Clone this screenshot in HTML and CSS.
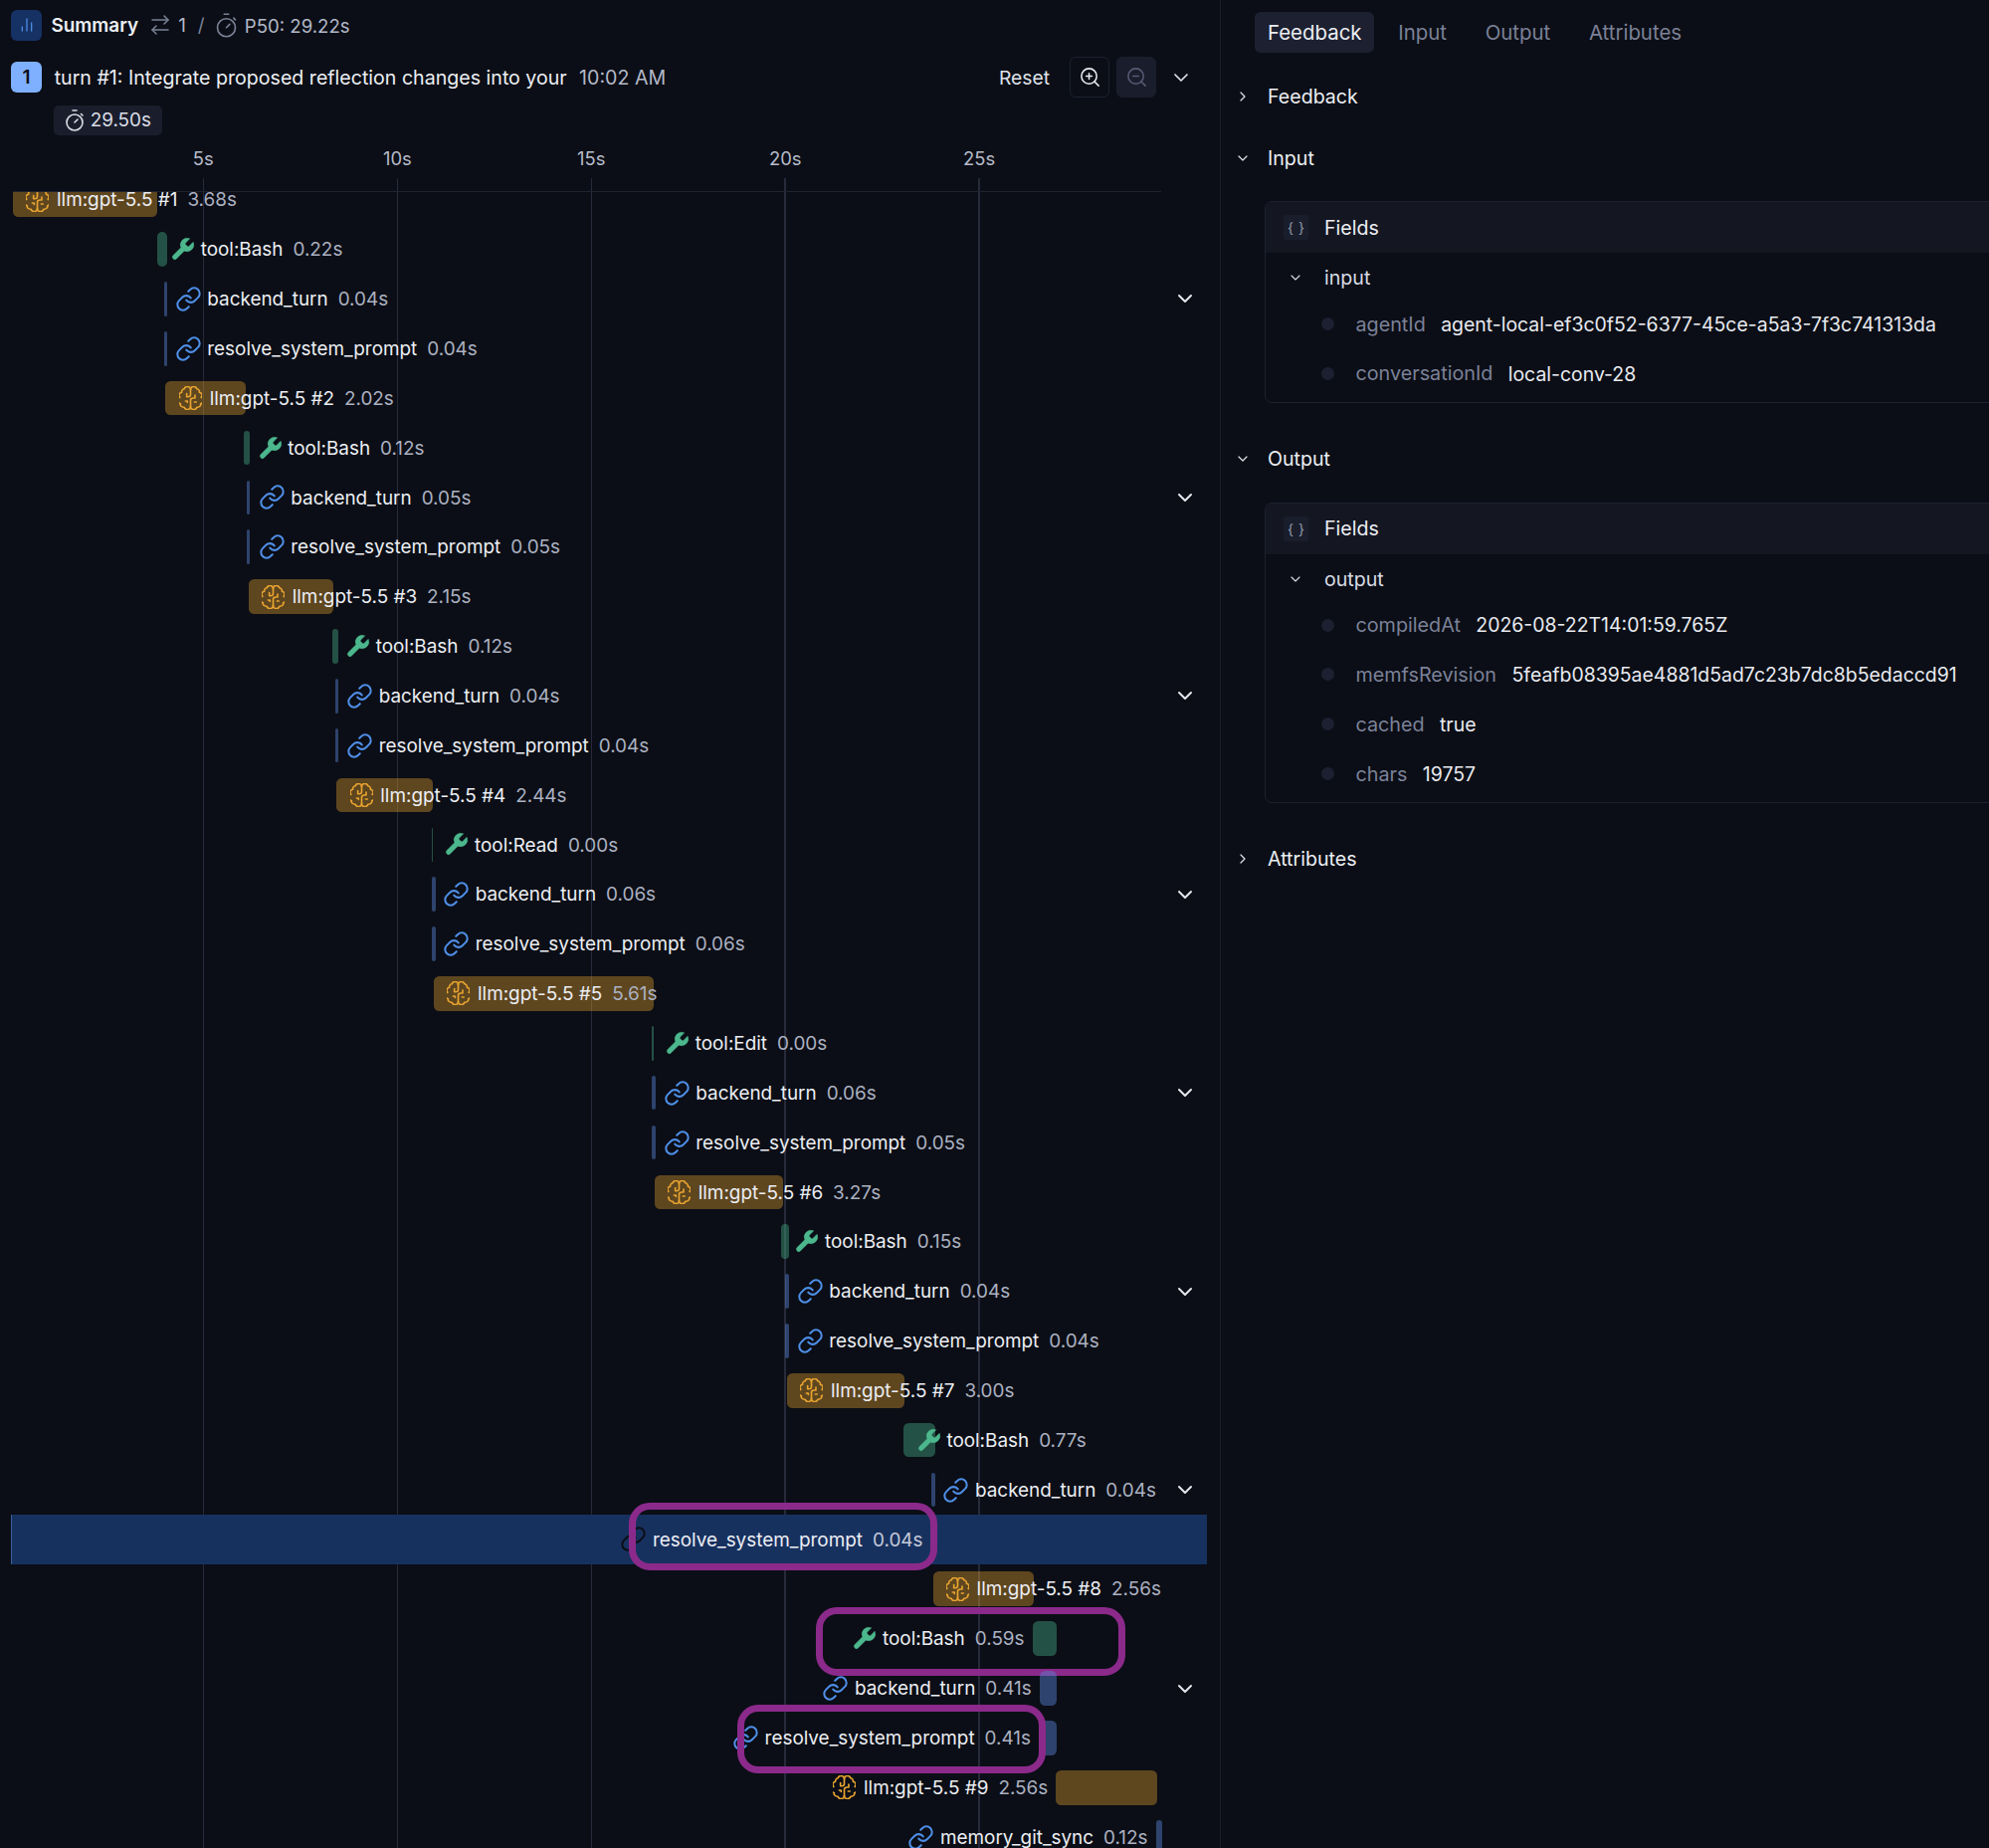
FILE: index.html
```html
<!DOCTYPE html>
<html lang="en">
<head>
<meta charset="utf-8">
<title>Trace</title>
<link rel="stylesheet" href="styles.css">
</head>
<body>
<svg class="defs" width="0" height="0" aria-hidden="true">
  <symbol id="i-link" viewBox="0 0 24 24"><path d="M10 13a5 5 0 0 0 7.54.54l3-3a5 5 0 0 0-7.07-7.07l-1.72 1.71"/><path d="M14 11a5 5 0 0 0-7.54-.54l-3 3a5 5 0 0 0 7.07 7.07l1.71-1.71"/></symbol>
  <symbol id="i-wrench" viewBox="0 0 24 24"><path d="M14.7 6.3a1 1 0 0 0 0 1.4l1.6 1.6a1 1 0 0 0 1.4 0l3.77-3.77a6 6 0 0 1-7.94 7.94l-6.91 6.91a2.12 2.12 0 0 1-3-3l6.91-6.91a6 6 0 0 1 7.94-7.94l-3.76 3.76z"/></symbol>
  <symbol id="i-brain" viewBox="3 1.6 18 20.8" preserveAspectRatio="none"><path d="M12 19.5a2.5 2.5 0 0 1-4.96.44 2.5 2.5 0 0 1-2.96-3.08 3 3 0 0 1-.34-5.58 2.5 2.5 0 0 1 1.32-4.24 2.5 2.5 0 0 1 1.98-3A2.5 2.5 0 0 1 9.5 2 2.5 2.5 0 0 1 12 4.5"/><path d="M12 4.5A2.5 2.5 0 0 1 14.5 2a2.5 2.5 0 0 1 2.46 2.04 2.5 2.5 0 0 1 1.98 3 2.5 2.5 0 0 1 1.32 4.24 3 3 0 0 1-.34 5.58 2.5 2.5 0 0 1-2.96 3.08A2.5 2.5 0 0 1 12 19.5"/><path d="M12 4.5V9a2 2 0 0 1-2 2H9V8"/><path d="M12 19.5V14a2 2 0 0 1 2-2h1.5V9.5"/><path d="M8 14.5h1.5V16"/><path d="M15 15.5h1.5"/></symbol>
  <symbol id="i-down" viewBox="0 0 24 24"><path d="m6 9 6 6 6-6"/></symbol>
  <symbol id="i-right" viewBox="0 0 24 24"><path d="m9 18 6-6-6-6"/></symbol>
  <symbol id="i-timer" viewBox="0 0 24 24"><path d="M10 2h4"/><path d="m12 14 3-3"/><circle cx="12" cy="14" r="8"/><path d="m18.5 5.5 1.5 1.5"/></symbol>
</svg>
<div class="app">
  <main class="trace">
    <div class="summary">
      <span class="sq sq-summary"><svg class="sq-bars" viewBox="0 0 24 24"><path d="M5 21v-6"/><path d="M12 21V3"/><path d="M19 21V9"/></svg></span>
      <strong class="t summary-title">Summary</strong>
      <svg class="ico-swap" viewBox="0 0 24 24"><path d="m16 3 4 4-4 4"/><path d="M20 7H4"/><path d="m8 21-4-4 4-4"/><path d="M4 17h16"/></svg>
      <span class="t muted count">1</span>
      <span class="t muted slash">/</span>
      <svg class="ico-timer"><use href="#i-timer"/></svg>
      <span class="t muted p50">P50: 29.22s</span>
    </div>
    <div class="turn">
      <span class="sq sq-num">1</span>
      <span class="t turn-title">turn #1: Integrate proposed reflection changes into your</span>
      <span class="t muted turn-time">10:02 AM</span>
      <span class="t reset">Reset</span>
      <button class="zoom-btn zoom-in"><svg viewBox="0 0 24 24"><circle cx="11" cy="11" r="8"/><path d="m21 21-4.35-4.35"/><path d="M11 8v6"/><path d="M8 11h6"/></svg></button>
      <button class="zoom-btn zoom-out"><svg viewBox="0 0 24 24"><circle cx="11" cy="11" r="8"/><path d="m21 21-4.35-4.35"/><path d="M8 11h6"/></svg></button>
      <svg class="turn-chev"><use href="#i-down"/></svg>
    </div>
    <div class="pill-row"><span class="pill"><svg class="ico-pill"><use href="#i-timer"/></svg><span class="t">29.50s</span></span></div>

    <section class="timeline">
      <div class="grid">
        <i class="gl" style="left:204.3px"></i><i class="gl" style="left:399.3px"></i><i class="gl" style="left:594.3px"></i><i class="gl" style="left:789.2px"></i><i class="gl" style="left:984.1px"></i>
      </div>
      <div class="ticks">
        <span class="tick" style="left:204.3px">5s</span><span class="tick" style="left:399.3px">10s</span><span class="tick" style="left:594.3px">15s</span><span class="tick" style="left:789.2px">20s</span><span class="tick" style="left:984.1px">25s</span>
      </div>
      <div class="rule"></div>
      <div class="rows">
        <div class="row first"><span class="bar llm" style="left:13.4px;width:145.1px"></span><span class="lbl" style="margin-left:26.4px"><svg class="ic brain"><use href="#i-brain"/></svg><span class="nm">llm:gpt-5.5 #1</span><span class="du">3.68s</span></span></div>
        <div class="row"><span class="bar tool" style="left:157.7px;width:10px"></span><span class="lbl" style="margin-left:171.1px"><svg class="ic wrench"><use href="#i-wrench"/></svg><span class="nm">tool:Bash</span><span class="du">0.22s</span></span></div>
        <div class="row"><span class="bar net" style="left:165px;width:2.7px"></span><span class="lbl" style="margin-left:177.7px"><svg class="ic link"><use href="#i-link"/></svg><span class="nm">backend_turn</span><span class="du">0.04s</span></span><svg class="chev"><use href="#i-down"/></svg></div>
        <div class="row"><span class="bar net" style="left:165px;width:2.7px"></span><span class="lbl" style="margin-left:177.7px"><svg class="ic link"><use href="#i-link"/></svg><span class="nm">resolve_system_prompt</span><span class="du">0.04s</span></span></div>

        <div class="row"><span class="bar llm" style="left:166.3px;width:80.4px"></span><span class="lbl" style="margin-left:180.1px"><svg class="ic brain"><use href="#i-brain"/></svg><span class="nm">llm:gpt-5.5 #2</span><span class="du">2.02s</span></span></div>
        <div class="row"><span class="bar tool" style="left:245.3px;width:6px"></span><span class="lbl" style="margin-left:258.7px"><svg class="ic wrench"><use href="#i-wrench"/></svg><span class="nm">tool:Bash</span><span class="du">0.12s</span></span></div>
        <div class="row"><span class="bar net" style="left:248px;width:3.3px"></span><span class="lbl" style="margin-left:261.7px"><svg class="ic link"><use href="#i-link"/></svg><span class="nm">backend_turn</span><span class="du">0.05s</span></span><svg class="chev"><use href="#i-down"/></svg></div>
        <div class="row"><span class="bar net" style="left:248px;width:3.3px"></span><span class="lbl" style="margin-left:261.7px"><svg class="ic link"><use href="#i-link"/></svg><span class="nm">resolve_system_prompt</span><span class="du">0.05s</span></span></div>

        <div class="row"><span class="bar llm" style="left:250px;width:85.3px"></span><span class="lbl" style="margin-left:263.1px"><svg class="ic brain"><use href="#i-brain"/></svg><span class="nm">llm:gpt-5.5 #3</span><span class="du">2.15s</span></span></div>
        <div class="row"><span class="bar tool" style="left:333.7px;width:6px"></span><span class="lbl" style="margin-left:347.1px"><svg class="ic wrench"><use href="#i-wrench"/></svg><span class="nm">tool:Bash</span><span class="du">0.12s</span></span></div>
        <div class="row"><span class="bar net" style="left:336.7px;width:3px"></span><span class="lbl" style="margin-left:350.1px"><svg class="ic link"><use href="#i-link"/></svg><span class="nm">backend_turn</span><span class="du">0.04s</span></span><svg class="chev"><use href="#i-down"/></svg></div>
        <div class="row"><span class="bar net" style="left:336.7px;width:3px"></span><span class="lbl" style="margin-left:350.1px"><svg class="ic link"><use href="#i-link"/></svg><span class="nm">resolve_system_prompt</span><span class="du">0.04s</span></span></div>

        <div class="row"><span class="bar llm" style="left:338.3px;width:96.4px"></span><span class="lbl" style="margin-left:351.7px"><svg class="ic brain"><use href="#i-brain"/></svg><span class="nm">llm:gpt-5.5 #4</span><span class="du">2.44s</span></span></div>
        <div class="row"><span class="bar tool" style="left:433.7px;width:1.5px"></span><span class="lbl" style="margin-left:446.4px"><svg class="ic wrench"><use href="#i-wrench"/></svg><span class="nm">tool:Read</span><span class="du">0.00s</span></span></div>
        <div class="row"><span class="bar net" style="left:433.7px;width:4px"></span><span class="lbl" style="margin-left:447.1px"><svg class="ic link"><use href="#i-link"/></svg><span class="nm">backend_turn</span><span class="du">0.06s</span></span><svg class="chev"><use href="#i-down"/></svg></div>
        <div class="row"><span class="bar net" style="left:433.7px;width:4px"></span><span class="lbl" style="margin-left:447.1px"><svg class="ic link"><use href="#i-link"/></svg><span class="nm">resolve_system_prompt</span><span class="du">0.06s</span></span></div>

        <div class="row"><span class="bar llm" style="left:436.3px;width:220.4px"></span><span class="lbl" style="margin-left:449.4px"><svg class="ic brain"><use href="#i-brain"/></svg><span class="nm">llm:gpt-5.5 #5</span><span class="du">5.61s</span></span></div>
        <div class="row"><span class="bar tool" style="left:655px;width:2px"></span><span class="lbl" style="margin-left:668.1px"><svg class="ic wrench"><use href="#i-wrench"/></svg><span class="nm">tool:Edit</span><span class="du">0.00s</span></span></div>
        <div class="row"><span class="bar net" style="left:655.3px;width:3.7px"></span><span class="lbl" style="margin-left:668.7px"><svg class="ic link"><use href="#i-link"/></svg><span class="nm">backend_turn</span><span class="du">0.06s</span></span><svg class="chev"><use href="#i-down"/></svg></div>
        <div class="row"><span class="bar net" style="left:655.3px;width:3.7px"></span><span class="lbl" style="margin-left:668.7px"><svg class="ic link"><use href="#i-link"/></svg><span class="nm">resolve_system_prompt</span><span class="du">0.05s</span></span></div>

        <div class="row"><span class="bar llm" style="left:657.7px;width:129px"></span><span class="lbl" style="margin-left:671.1px"><svg class="ic brain"><use href="#i-brain"/></svg><span class="nm">llm:gpt-5.5 #6</span><span class="du">3.27s</span></span></div>
        <div class="row"><span class="bar tool" style="left:785px;width:7.7px"></span><span class="lbl" style="margin-left:798.4px"><svg class="ic wrench"><use href="#i-wrench"/></svg><span class="nm">tool:Bash</span><span class="du">0.15s</span></span></div>
        <div class="row"><span class="bar net" style="left:789px;width:3.7px"></span><span class="lbl" style="margin-left:802.7px"><svg class="ic link"><use href="#i-link"/></svg><span class="nm">backend_turn</span><span class="du">0.04s</span></span><svg class="chev"><use href="#i-down"/></svg></div>
        <div class="row"><span class="bar net" style="left:789px;width:3.7px"></span><span class="lbl" style="margin-left:802.7px"><svg class="ic link"><use href="#i-link"/></svg><span class="nm">resolve_system_prompt</span><span class="du">0.04s</span></span></div>

        <div class="row"><span class="bar llm" style="left:791px;width:118px"></span><span class="lbl" style="margin-left:804.4px"><svg class="ic brain"><use href="#i-brain"/></svg><span class="nm">llm:gpt-5.5 #7</span><span class="du">3.00s</span></span></div>
        <div class="row"><span class="bar tool" style="left:908px;width:31.6px"></span><span class="lbl" style="margin-left:920.8px"><svg class="ic wrench"><use href="#i-wrench"/></svg><span class="nm">tool:Bash</span><span class="du">0.77s</span></span></div>
        <div class="row"><span class="bar net" style="left:936.3px;width:3.3px"></span><span class="lbl" style="margin-left:949.4px"><svg class="ic link"><use href="#i-link"/></svg><span class="nm">backend_turn</span><span class="du">0.04s</span></span><svg class="chev"><use href="#i-down"/></svg></div>
        <div class="row row-sel"><span class="lbl" style="margin-left:625.4px"><svg class="ic link"><use href="#i-link"/></svg><span class="nm">resolve_system_prompt</span><span class="du">0.04s</span></span><span class="mark mark-a"></span></div>

        <div class="row"><span class="bar llm" style="left:938px;width:101px"></span><span class="lbl" style="margin-left:951px"><svg class="ic brain"><use href="#i-brain"/></svg><span class="nm">llm:gpt-5.5 #8</span><span class="du">2.56s</span></span></div>
        <div class="row"><span class="bar tool" style="left:1038px;width:24.4px"></span><span class="lbl" style="margin-left:856.4px"><svg class="ic wrench"><use href="#i-wrench"/></svg><span class="nm">tool:Bash</span><span class="du">0.59s</span></span><span class="mark mark-b"></span></div>
        <div class="row"><span class="bar net" style="left:1045px;width:17.4px"></span><span class="lbl" style="margin-left:828.4px"><svg class="ic link"><use href="#i-link"/></svg><span class="nm">backend_turn</span><span class="du">0.41s</span></span><svg class="chev"><use href="#i-down"/></svg></div>
        <div class="row"><span class="bar net" style="left:1045px;width:17.4px"></span><span class="lbl" style="margin-left:738px"><svg class="ic link"><use href="#i-link"/></svg><span class="nm">resolve_system_prompt</span><span class="du">0.41s</span></span><span class="mark mark-c"></span></div>

        <div class="row"><span class="bar llm" style="left:1061px;width:101.5px"></span><span class="lbl" style="margin-left:837.4px"><svg class="ic brain"><use href="#i-brain"/></svg><span class="nm">llm:gpt-5.5 #9</span><span class="du">2.56s</span></span></div>
        <div class="row"><span class="bar net" style="left:1161.6px;width:6.2px"></span><span class="lbl" style="margin-left:914.4px"><svg class="ic link"><use href="#i-link"/></svg><span class="nm">memory_git_sync</span><span class="du">0.12s</span></span></div>
      </div>
    </section>
  </main>

  <aside class="details">
    <nav class="tabs">
      <span class="tab tab-on"><span class="t">Feedback</span></span><span class="tab"><span class="t">Input</span></span><span class="tab"><span class="t">Output</span></span><span class="tab"><span class="t">Attributes</span></span>
    </nav>
    <div class="acc"><svg class="acc-chev"><use href="#i-right"/></svg><span class="t">Feedback</span></div>
    <div class="acc"><svg class="acc-chev"><use href="#i-down"/></svg><span class="t">Input</span></div>
    <div class="card">
      <div class="card-head"><span class="braces">{ }</span><span class="t">Fields</span></div>
      <div class="kv-head"><span class="kv-chev"><svg><use href="#i-down"/></svg></span><span class="t">input</span></div>
      <div class="kv"><i class="dot"></i><span class="t k">agentId</span><span class="t v">agent-local-ef3c0f52-6377-45ce-a5a3-7f3c741313da</span></div>
      <div class="kv"><i class="dot"></i><span class="t k">conversationId</span><span class="t v">local-conv-28</span></div>
    </div>
    <div class="acc acc-next"><svg class="acc-chev"><use href="#i-down"/></svg><span class="t">Output</span></div>
    <div class="card">
      <div class="card-head"><span class="braces">{ }</span><span class="t">Fields</span></div>
      <div class="kv-head"><span class="kv-chev"><svg><use href="#i-down"/></svg></span><span class="t">output</span></div>
      <div class="kv"><i class="dot"></i><span class="t k">compiledAt</span><span class="t v">2026-08-22T14:01:59.765Z</span></div>
      <div class="kv"><i class="dot"></i><span class="t k">memfsRevision</span><span class="t v">5feafb08395ae4881d5ad7c23b7dc8b5edaccd91</span></div>
      <div class="kv"><i class="dot"></i><span class="t k">cached</span><span class="t v">true</span></div>
      <div class="kv"><i class="dot"></i><span class="t k">chars</span><span class="t v">19757</span></div>
    </div>
    <div class="acc acc-last"><svg class="acc-chev"><use href="#i-right"/></svg><span class="t">Attributes</span></div>
  </aside>
</div>
</body>
</html>
```
FILE: styles.css
```css
* { box-sizing: border-box; }
html, body { margin: 0; height: 100%; }
body {
  background: #0b0e16;
  color: #e8eaf0;
  font-family: Inter, "Liberation Sans", sans-serif;
  font-size: 18.9px;
  line-height: 1.4;
  overflow: hidden;
}
svg { display: block; fill: none; stroke: currentColor; stroke-linecap: round; stroke-linejoin: round; }
.defs { position: absolute; }
.app { display: flex; height: 1857px; overflow: hidden; }
.t { display: block; padding-top: 1.8px; white-space: nowrap; }

/* left: trace */
.trace { width: 1227px; flex: none; border-right: 1.5px solid #1b1e2a; display: flex; flex-direction: column; }
.muted { color: #b3b8c7; }
.summary { height: 50px; padding-left: 11px; display: flex; align-items: center; }
.sq { width: 31px; height: 31px; border-radius: 6px; display: flex; align-items: center; justify-content: center; flex: none; }
.sq-summary { background: #163163; color: #4a8be0; }
.sq-bars { width: 16px; height: 16px; stroke-width: 2; }
.summary-title { font-weight: 600; margin-left: 9.5px; color: #eceef3; }
.ico-swap { width: 24px; height: 24px; margin-left: 10px; stroke-width: 1.5; color: #7b8296; }
.count { margin-left: 6px; }
.slash { margin-left: 12px; color: #7b8296; }
.ico-timer { width: 27px; height: 27px; margin-left: 8.8px; margin-right: 4.4px; stroke-width: 1.45; color: #7b8296; }
.p50 { font-size: 18.6px; }

.turn { height: 55.5px; padding-left: 11px; display: flex; align-items: center; }
.sq-num { background: #7eb0ff; color: #0b0e16; font-weight: 600; }
.turn-title { margin-left: 12.7px; color: #eceef3; font-size: 19.6px; }
.turn-time { margin-left: 12.4px; font-size: 19.6px; }
.reset { margin-left: auto; color: #dfe2ea; font-size: 19.3px; }
.zoom-btn { width: 40px; height: 41px; border-radius: 6px; padding: 0; display: flex; align-items: center; justify-content: center; background: transparent; border: 1.5px solid #1d2130; color: #e8eaf0; }
.zoom-btn svg { width: 23px; height: 23px; stroke-width: 1.6; }
.zoom-in { margin-left: 20.2px; }
.zoom-out { margin-left: 6.8px; background: #1a1e2c; border-color: #1a1e2c; color: #555b74; }
.turn-chev { width: 24px; height: 24px; margin-left: 12.7px; margin-right: 27.3px; stroke-width: 1.7; color: #dfe2ea; }

.pill-row { height: 30.5px; padding-left: 54.3px; display: flex; }
.pill { width: 108.4px; height: 30px; padding-left: 8.4px; background: #1a1e2c; border-radius: 5px; display: flex; align-items: center; gap: 4px; color: #dadde5; }
.ico-pill { width: 24px; height: 24px; flex: none; stroke-width: 1.6; }

/* timeline */
.timeline { position: relative; flex: 1; min-height: 0; display: flex; flex-direction: column; }
.grid { position: absolute; inset: 43px 0 0 0; }
.gl { position: absolute; top: 0; bottom: 0; width: 1.5px; margin-left: -.75px; background: #262a3a; }
.ticks { position: relative; height: 55.5px; flex: none; }
.tick { position: absolute; top: 11px; transform: translateX(-50%); color: #b6bbc9; font-size: 18.4px; }
.rule { position: relative; flex: none; height: 1.5px; width: 1154px; margin-left: 12.5px; background: #1f2330; }
.rows { position: relative; z-index: 1; flex: 1; min-height: 0; overflow: hidden; }
.row { position: relative; height: 49.86px; display: flex; align-items: center; }
.first { margin-top: -17.2px; }
.bar { position: absolute; top: 7.6px; height: 34.6px; border-radius: 5.5px; }
.llm { background: rgba(232, 164, 48, .38); }
.tool { background: rgba(76, 183, 141, .4); }
.net { background: rgba(88, 134, 216, .45); }
.lbl { position: relative; display: flex; align-items: center; white-space: nowrap; }
.ic { width: 23px; height: 24px; flex: none; overflow: visible; }
.link { color: #4f8fe8; width: 27px; height: 27px; margin: 0 -2px; stroke-width: 1.8; }
.wrench { color: #4cb78d; fill: #4cb78d; stroke-width: .4; width: 27px; height: 27px; margin: 0 -3px 0 -1px; }
.brain { color: #e8a430; stroke-width: 1.3; }
.nm { margin-left: 7.6px; padding-top: 1.8px; color: #eceef3; }
.du { margin-left: 10px; padding-top: 1.8px; color: #abb1c1; }
.chev { position: absolute; right: 23.5px; width: 24px; height: 24px; stroke-width: 2; color: #e4e6ec; }

.row-sel::before { content: ""; position: absolute; left: 11px; width: 1201px; top: 0; bottom: 0; background: #17315f; border-left: 1.5px solid #3c5f9f; }
.row-sel .link { color: #0b0e16; }
.row-sel .du { color: #c3c9d8; }
.mark { position: absolute; border: 7.5px solid #8b2a8b; border-radius: 21px; height: 68.2px; pointer-events: none; }
.mark-a { left: 631.8px; width: 310.2px; top: -12px; }
.mark-b { left: 820.4px; width: 310.2px; top: -6.3px; }
.mark-c { left: 740.8px; width: 310.6px; top: -8px; }

/* right: details */
.details { flex: 1; min-width: 0; padding-left: 14px; font-size: 19.6px; }
.tabs { display: flex; gap: 12.7px; padding: 12.3px 0 12.7px 20px; font-size: 20.4px; }
.tab { height: 40.7px; padding: 0 13px; display: flex; align-items: center; color: #7b8196; border-radius: 6px; }
.tab-on { background: #1c2030; color: #eceef3; margin-right: -1.9px; }
.acc { height: 62px; display: flex; align-items: center; color: #eceef3; }
.acc-chev { width: 16px; height: 16px; margin-right: 17px; stroke-width: 1.8; color: #dfe2ea; }
.acc-next { margin-top: 25.5px; }
.acc-last { margin-top: 25px; }
.card { margin: 12.8px 0 0 29.7px; width: 800px; border: 1.5px solid #1d2130; border-radius: 7px; padding-bottom: 3.5px; }
.card-head { height: 50.5px; background: #141722; padding-left: 18.3px; display: flex; align-items: center; gap: 16px; color: #eceef3; border-radius: 6px 6px 0 0; }
.braces { width: 25px; height: 25px; background: #1a1e2c; border-radius: 3px; display: flex; align-items: center; justify-content: center; color: #9298ab; font-size: 14px; word-spacing: 1px; }
.kv-head { height: 46.7px; padding: 3.3px 0 0 18.3px; display: flex; align-items: center; gap: 16px; color: #d8dbe4; }
.kv-chev { width: 25px; display: flex; justify-content: center; }
.kv-chev svg { width: 16px; height: 16px; stroke-width: 1.7; }
.kv { height: 49.8px; padding-left: 56px; display: flex; align-items: center; white-space: nowrap; }
.dot { width: 13px; height: 13px; border-radius: 50%; background: #1c2030; margin-right: 21.8px; flex: none; }
.k { color: #7c8299; margin-right: 15.4px; font-size: 19.75px; }
.v { color: #e8eaf0; font-size: 19.45px; }
```
